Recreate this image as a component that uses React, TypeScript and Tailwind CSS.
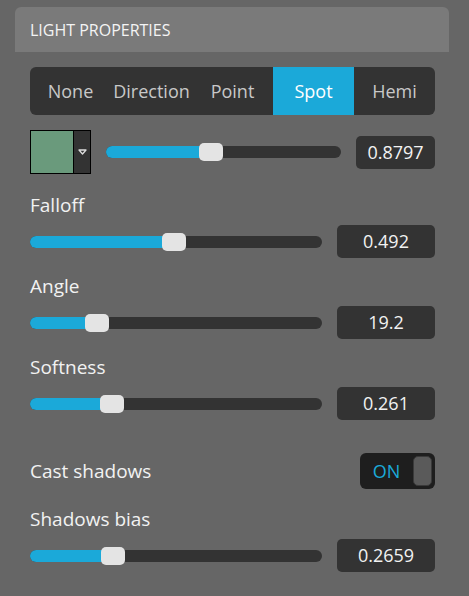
import React from "react";

const font = { fontFamily: '"Open Sans", "Noto Sans", sans-serif' };

function Slider({ thumb, width }: { thumb: number; width: number }) {
  return (
    <div className="relative h-[18px]" style={{ width }}>
      <div className="absolute left-0 right-0 top-[3px] h-[12px] rounded-full bg-[#333333]" />
      <div
        className="absolute left-0 top-[3px] h-[12px] rounded-l-full bg-[#1ba9d9]"
        style={{ width: thumb + 12 }}
      />
      <div
        className="absolute top-0 h-[18px] w-[24px] rounded-[5px] bg-[#e4e4e4]"
        style={{ left: thumb }}
      />
    </div>
  );
}

function ValueBox({ value, w }: { value: string; w: string }) {
  return (
    <div
      className={`${w} flex h-[33px] items-center justify-center rounded-[5px] bg-[#333333] text-[18px] text-[#f2f2f2]`}
    >
      {value}
    </div>
  );
}

function SliderSection({ label, thumb, value }: { label: string; thumb: number; value: string }) {
  return (
    <div className="mt-[14px]">
      <div className="flex h-[28px] items-center text-[19px] text-[#f2f2f2]">{label}</div>
      <div className="mt-[6px] flex h-[33px] items-center justify-between">
        <Slider thumb={thumb} width={292} />
        <ValueBox value={value} w="w-[98px]" />
      </div>
    </div>
  );
}

export default function App() {
  const tabs = ["None", "Direction", "Point", "Spot", "Hemi"];
  return (
    <div className="h-[596px] w-[469px] bg-[#666666] pt-[7px]" style={font}>
      <div className="ml-[15px] mr-[20px] flex h-[45px] items-center rounded-t-[6px] bg-[#7a7a7a] pl-[15px] text-[16px] text-[#f4f4f4]">
        LIGHT PROPERTIES
      </div>
      <div className="ml-[30px] w-[405px]">
        <div className="mt-[15px] grid h-[48px] grid-cols-5 overflow-hidden rounded-[6px] bg-[#333333] text-[18px]">
          {tabs.map((t) =>
            t === "Spot" ? (
              <div key={t} className="flex items-center justify-center bg-[#1ba9d9] text-white">
                {t}
              </div>
            ) : (
              <div key={t} className="flex items-center justify-center text-[#c8c8c8]">
                {t}
              </div>
            )
          )}
        </div>

        <div className="mt-[15px] flex h-[44px] items-center">
          <div className="flex h-[44px] w-[61px] border border-black">
            <div className="w-[43px] border-r border-black bg-[#6a9a7c]" />
            <div className="flex flex-1 items-center justify-center bg-[#333333]">
              <svg width="9" height="6" viewBox="0 0 9 6">
                <path d="M1 1 H8 L4.5 5 Z" fill="none" stroke="#dddddd" strokeWidth="1.3" strokeLinejoin="round" />
              </svg>
            </div>
          </div>
          <div className="ml-[15px]">
            <Slider thumb={93} width={235} />
          </div>
          <div className="ml-auto">
            <ValueBox value="0.8797" w="w-[79px]" />
          </div>
        </div>

        <div className="pt-[3px]">
          <SliderSection label="Falloff" thumb={132} value="0.492" />
        </div>
        <SliderSection label="Angle" thumb={55} value="19.2" />
        <SliderSection label="Softness" thumb={70} value="0.261" />

        <div className="mt-[33px] flex h-[36px] items-center justify-between">
          <div className="text-[19px] text-[#f2f2f2]">Cast shadows</div>
          <div className="flex h-[36px] w-[75px] items-center rounded-[6px] bg-[#1e1e1e] pr-[3px]">
            <div className="flex-1 text-center text-[18px] text-[#1ba9d9]">ON</div>
            <div className="h-[30px] w-[19px] rounded-[5px] border border-[#3a3a3a] bg-[#5a5a5a]" />
          </div>
        </div>
        <div className="pt-[2px]">
          <SliderSection label="Shadows bias" thumb={71} value="0.2659" />
        </div>
      </div>
    </div>
  );
}
